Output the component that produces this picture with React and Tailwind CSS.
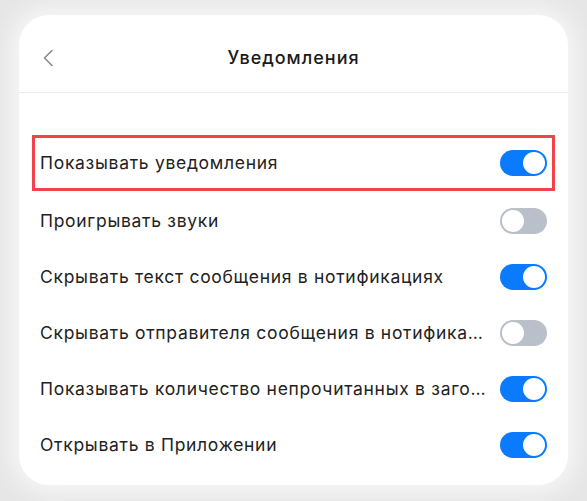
import React from "react";

const rows = [
  { label: "Показывать уведомления", on: true, highlight: true },
  { label: "Проигрывать звуки", on: false },
  { label: "Скрывать текст сообщения в нотификациях", on: true },
  { label: "Скрывать отправителя сообщения в нотификациях", on: false },
  { label: "Показывать количество непрочитанных в заголовке", on: true },
  { label: "Открывать в Приложении", on: true },
];

function Toggle({ on }) {
  return (
    <div
      className={
        "w-[47px] h-[26px] rounded-full p-[2px] flex shrink-0 " +
        (on ? "bg-[#0a7aff] justify-end" : "bg-[#bac0ca] justify-start")
      }
    >
      <div className="w-[22px] h-[22px] rounded-full bg-white" />
    </div>
  );
}

export default function App() {
  return (
    <div
      className="w-[587px] h-[501px] bg-[#e6e6e6] pt-[15px] pl-[19px]"
      style={{ fontFamily: "Inter, 'Noto Sans', sans-serif" }}
    >
      <div className="w-[549px] h-[470px] bg-white rounded-[30px] shadow-[0_0_24px_8px_rgba(255,255,255,0.7)] flex flex-col">
        <div className="h-[78px] relative flex items-center justify-center border-b border-[#ececec]">
          <svg
            className="absolute left-[23px] top-[34px]"
            width="12"
            height="18"
            viewBox="0 0 12 18"
            fill="none"
          >
            <path d="M10 1.5 L2.5 9 L10 16.5" stroke="#8a8a8a" strokeWidth="1.6" strokeLinecap="round" strokeLinejoin="round" />
          </svg>
          <span className="text-[18px] font-medium tracking-[1px] text-[#1a1a1a] mt-[8px]">Уведомления</span>
        </div>
        <div className="pt-[42px] px-[13px] flex flex-col">
          {rows.map((r, i) => (
            <div
              key={i}
              className={
                "h-[56px] flex items-center gap-[13px] " +
                (r.highlight
                  ? "border-[3px] border-[#f2424a] h-[54px] mb-[2px] pl-[5px] pr-[5px]"
                  : "pl-[8px] pr-[8px]")
              }
            >
              <span className="flex-1 min-w-0 truncate text-[17.5px] tracking-[0.7px] text-[#222]">
                {r.label}
              </span>
              <Toggle on={r.on} />
            </div>
          ))}
        </div>
      </div>
    </div>
  );
}
